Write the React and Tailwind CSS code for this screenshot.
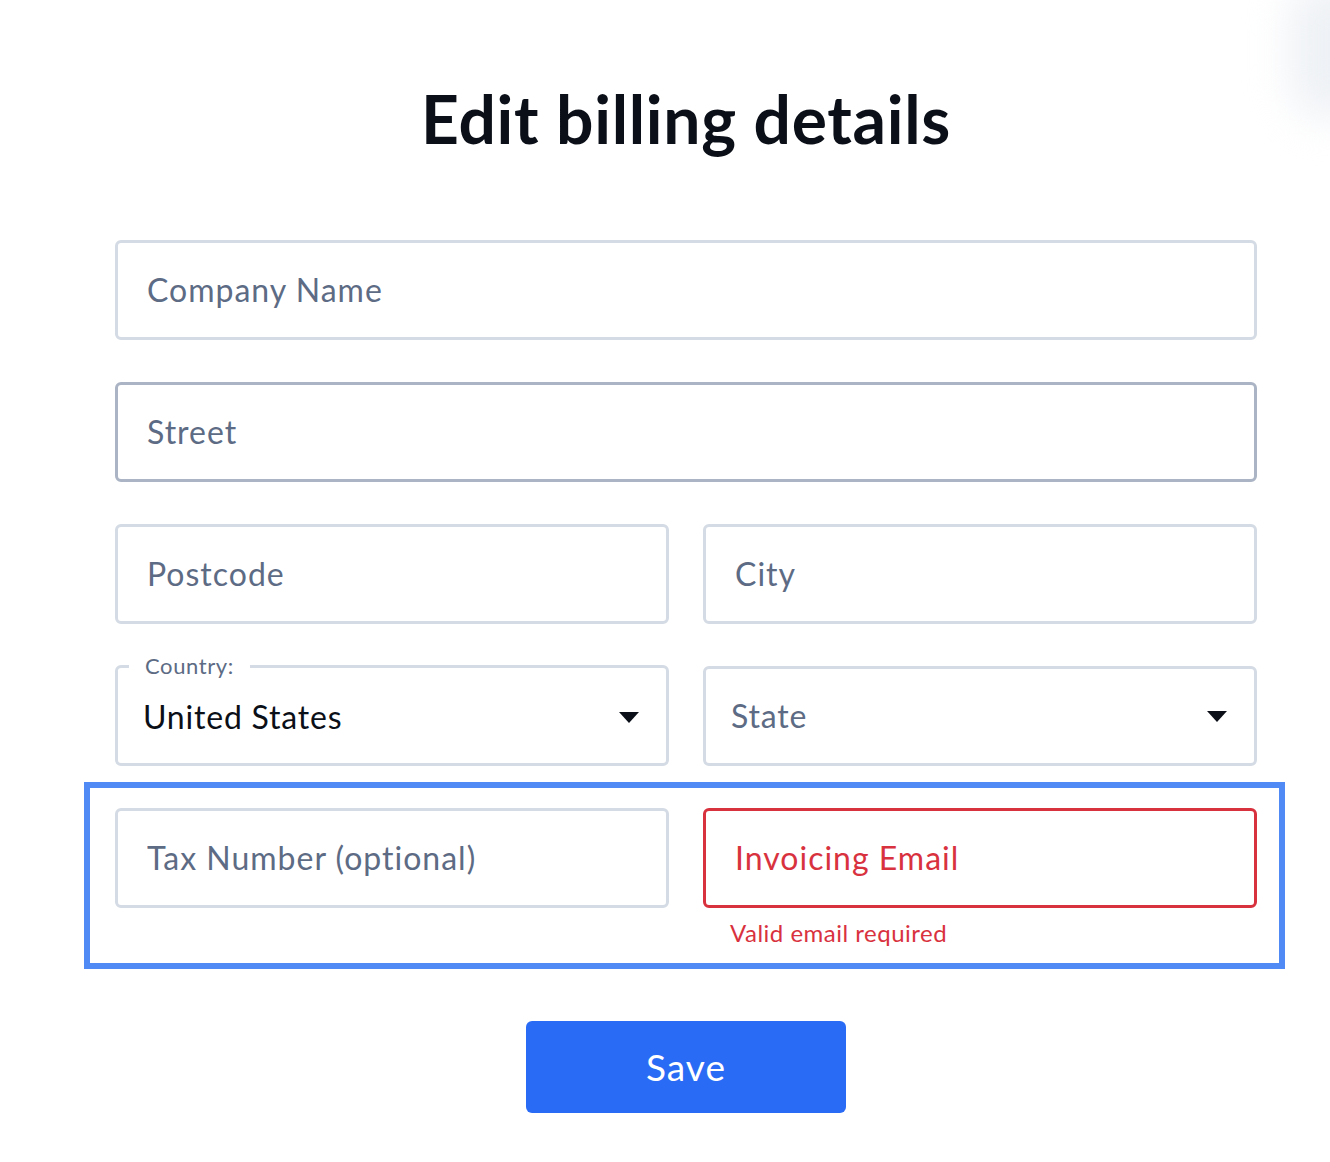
import { useState } from 'react'

const font = { fontFamily: 'Lato, "Noto Sans", sans-serif' }

function Caret() {
  return (
    <svg width="20" height="11" viewBox="0 0 20 11" aria-hidden="true">
      <path d="M0 0h20L10 11z" fill="#0b0f17" />
    </svg>
  )
}

function TextField({ placeholder, className = '', error = false }) {
  return (
    <div
      className={`flex h-[100px] items-center rounded-[6px] border-[3px] bg-white px-[29px] ${
        error ? 'border-[#d9323f]' : 'border-[#d4dbe4]'
      } ${className}`}
    >
      <input
        placeholder={placeholder}
        className={`w-full bg-transparent text-[32px] tracking-[1px] outline-none ${
          error ? 'placeholder:text-[#d9323f]' : 'placeholder:text-[#5d6b84]'
        }`}
      />
    </div>
  )
}

export default function App() {
  const [country] = useState('United States')

  return (
    <div className="relative min-h-[1162px] overflow-hidden bg-white text-[#0b0f17]" style={font}>
      <div className="pointer-events-none absolute -right-[40px] -top-[20px] h-[140px] w-[80px] rounded-full bg-[#eef1f5] blur-[20px]" />
      <div className="ml-[115px] w-[1142px] pt-[78px]">
        <h1 className="text-center text-[66px] font-bold leading-[82px] tracking-[0.7px]">
          Edit billing details
        </h1>

        <form className="mt-[80px] flex flex-col gap-[42px]" onSubmit={(e) => e.preventDefault()}>
          <TextField placeholder="Company Name" />
          <TextField placeholder="Street" className="!border-[#aab4c4]" />

          <div className="grid grid-cols-2 gap-[34px]">
            <TextField placeholder="Postcode" />
            <TextField placeholder="City" />
          </div>

          <div className="grid grid-cols-2 gap-[34px]">
            <fieldset className="relative -mt-[12px] h-[112px] rounded-[6px] border-[3px] border-[#d4dbe4] px-[25px] pb-[3px]">
              <legend className="ml-[-14px] px-[16px] text-[22px] leading-[24px] tracking-[0.6px] text-[#5d6b84]">
                Country:
              </legend>
              <div className="flex h-[78px] items-center justify-between pr-[2px]">
                <span className="text-[32px] leading-none tracking-[0.8px] text-[#0b0f17]">{country}</span>
                <Caret />
              </div>
            </fieldset>
            <div className="flex h-[100px] items-center justify-between rounded-[6px] border-[3px] border-[#d4dbe4] pl-[25px] pr-[27px]">
              <span className="text-[32px] leading-none tracking-[0.8px] text-[#5d6b84]">State</span>
              <Caret />
            </div>
          </div>

          <div className="-ml-[31px] -mr-[28px] -mt-[26px] border-[6px] border-[#4f8af5] pl-[25px] pr-[22px] pt-[20px] pb-[15px]">
            <div className="grid grid-cols-2 gap-[34px]">
              <TextField placeholder="Tax Number (optional)" />
              <div>
                <TextField placeholder="Invoicing Email" error />
                <p className="mt-[10px] pl-[27px] text-[24px] leading-[30px] tracking-[0.5px] text-[#d9323f]">
                  Valid email required
                </p>
              </div>
            </div>
          </div>

          <div className="mt-[10px] flex justify-center">
            <button
              type="submit"
              className="h-[92px] w-[320px] rounded-[6px] bg-[#2a6bf5] text-[37px] tracking-[1px] text-white"
            >
              Save
            </button>
          </div>
        </form>
      </div>
    </div>
  )
}
